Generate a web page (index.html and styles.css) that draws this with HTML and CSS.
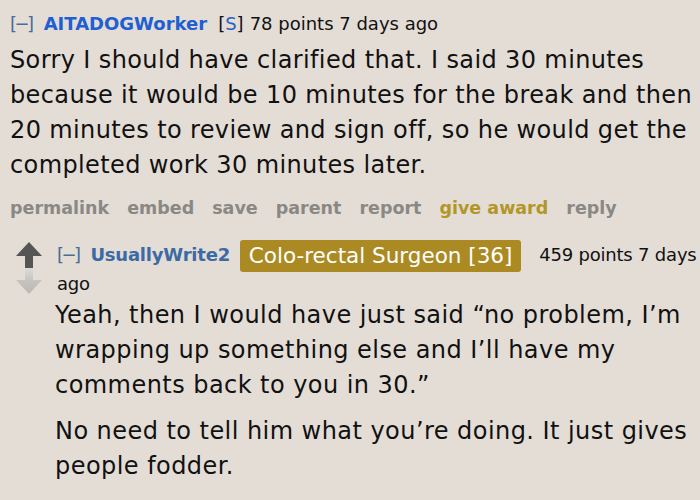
FILE: index.html
```html
<!DOCTYPE html>
<html>
<head>
<meta charset="utf-8">
<link rel="stylesheet" href="styles.css">
</head>
<body>
<div class="comment">
  <div class="tagline">
    <span class="expand">[&minus;]</span>
    <span class="author op">AITADOGWorker</span>
    <span class="sub">[<span class="s">S</span>]</span>
    <span class="pts">78 points 7 days ago</span>
  </div>
  <div class="body first">
    <p>Sorry I should have clarified that. I said 30 minutes because it would be 10 minutes for the break and then 20 minutes to review and sign off, so he would get the completed work 30 minutes later.</p>
  </div>
  <div class="actions">
    <span>permalink</span>
    <span>embed</span>
    <span>save</span>
    <span>parent</span>
    <span>report</span>
    <span class="award">give award</span>
    <span>reply</span>
  </div>
  <div class="child">
    <div class="votes">
      <svg class="arrow" width="26" height="26" viewBox="0 0 26 26"><path d="M13 0 L26 14 L17 14 L17 26 L9 26 L9 14 L0 14 Z" fill="#555"/></svg>
      <svg class="arrow" width="26" height="26" viewBox="0 0 26 26"><defs><linearGradient id="g" x1="0" y1="0" x2="0" y2="1"><stop offset="0" stop-color="#dedad5"/><stop offset="0.5" stop-color="#c6c3bf"/><stop offset="1" stop-color="#b9b7b4"/></linearGradient></defs><path d="M9 0 L17 0 L17 12 L26 12 L13 26 L0 12 L9 12 Z" fill="url(#g)"/></svg>
    </div>
    <div class="entry">
      <div class="tagline2">
        <span class="expand">[&minus;]</span>
        <span class="author2">UsuallyWrite2</span>
        <span class="flair">Colo-rectal Surgeon [36]</span>
        <span class="score">459 points 7 days</span>
        <span class="score">ago</span>
      </div>
      <div class="body second">
        <p>Yeah, then I would have just said “no problem, I’m wrapping up something else and I’ll have my comments back to you in 30.”</p>
        <p>No need to tell him what you’re doing. It just gives people fodder.</p>
      </div>
    </div>
  </div>
</div>
</body>
</html>
```
FILE: styles.css
```css
html, body {
  margin: 0;
  padding: 0;
  background: #e3ddd6;
}
body {
  font-family: "DejaVu Sans", "Liberation Sans", sans-serif;
  color: #111;
  width: 700px;
  height: 500px;
  overflow: hidden;
}
.comment {
  padding: 12px 0 0 10px;
}
.tagline {
  font-size: 18px;
  line-height: 24px;
  display: flex;
  white-space: nowrap;
}
.expand {
  color: #4a6d96;
  letter-spacing: -2.5px;
}
.author {
  font-weight: bold;
  color: #1f5fd1;
  margin-left: 12px;
}
.sub {
  margin-left: 11px;
}
.sub .s {
  color: #2a5fcb;
}
.pts {
  margin-left: 6px;
}
.body p {
  margin: 0;
}
.first {
  font-size: 24px;
  line-height: 35px;
  letter-spacing: 0.38px;
  margin-top: 7px;
}
.actions {
  margin-top: 13px;
  font-size: 17.5px;
  font-weight: bold;
  color: #8a8884;
  display: flex;
  gap: 18px;
  line-height: 24px;
  white-space: nowrap;
}
.award {
  color: #b39628;
}
.child {
  display: flex;
  margin-top: 20px;
}
.votes {
  width: 45px;
  flex: none;
  display: flex;
  flex-direction: column;
  padding-top: 2px;
  padding-left: 6px;
  box-sizing: border-box;
}
.arrow {
  display: block;
}
.entry {
  flex: 1;
}
.tagline2 {
  font-size: 18px;
  line-height: 24px;
  padding-left: 2px;
}
.author2 {
  font-weight: bold;
  color: #3c6aa5;
  margin-left: 6px;
  letter-spacing: -0.2px;
}
.flair {
  display: inline-block;
  background: #ac8a23;
  color: #fff;
  font-size: 21.5px;
  line-height: 32px;
  margin: 0 12px 0 4px;
  padding: 0 9px;
  border-radius: 3px;
  vertical-align: middle;
}
.score {
  letter-spacing: -0.2px;
}
.second {
  font-size: 24px;
  line-height: 35px;
  letter-spacing: 0.45px;
  margin-top: 2px;
}
.second p + p {
  margin-top: 11px;
}
```
